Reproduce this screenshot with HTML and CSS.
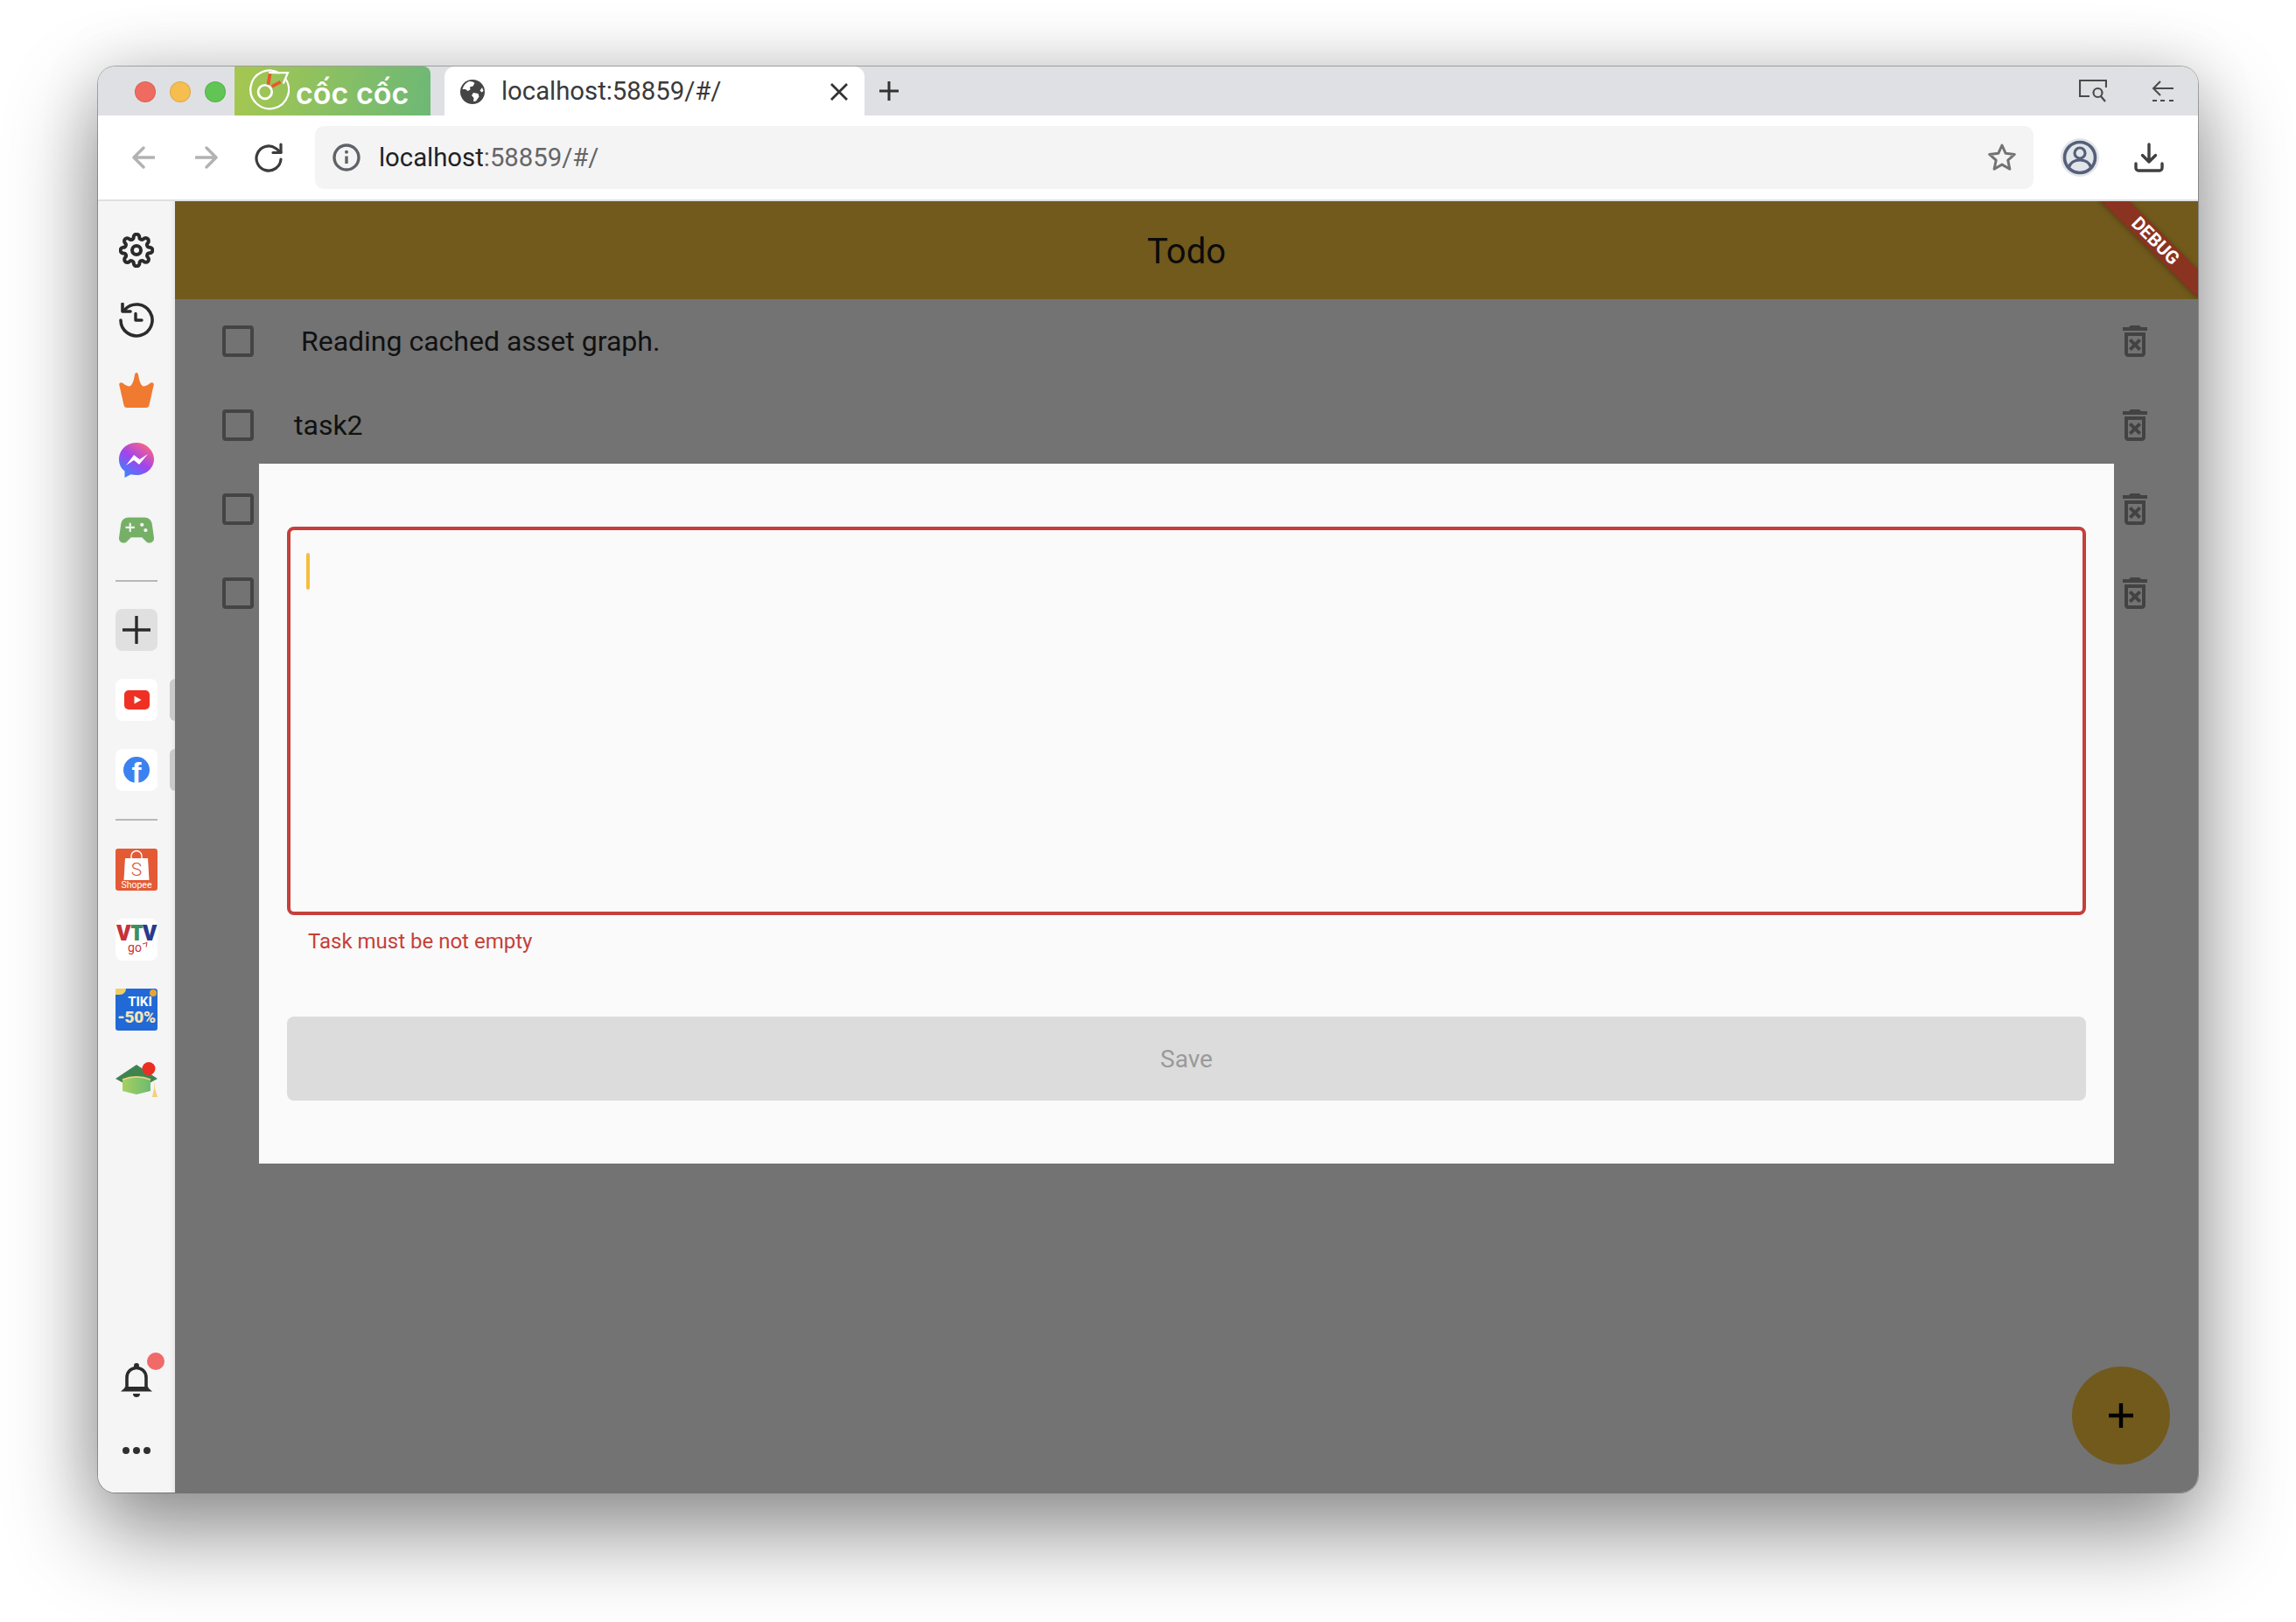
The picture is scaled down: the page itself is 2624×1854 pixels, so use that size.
FILE: index.html
```html
<!DOCTYPE html>
<html lang="en">
<head>
<meta charset="utf-8">
<title>Todo</title>
<link rel="stylesheet" href="styles.css">
</head>
<body>
<svg class="defs" width="0" height="0" aria-hidden="true">
  <symbol id="trash" viewBox="0 0 24 24"><path d="M14.12 10.47L12 12.59l-2.13-2.12-1.41 1.41L10.59 14l-2.12 2.12 1.41 1.41L12 15.41l2.12 2.12 1.41-1.41L13.41 14l2.12-2.12zM15.5 4l-1-1h-5l-1 1H5v2h14V4zM6 19c0 1.1.9 2 2 2h8c1.1 0 2-.9 2-2V7H6v12zM8 9h8v10H8V9z"/></symbol>
  <linearGradient id="msg" x1="0.15" y1="1" x2="0.85" y2="0"><stop offset="0" stop-color="#2f8bff"/><stop offset=".5" stop-color="#a243ee"/><stop offset=".9" stop-color="#f2618f"/></linearGradient>
  <linearGradient id="cap" x1="0" y1="0" x2="1" y2="0"><stop offset="0" stop-color="#a6d05f"/><stop offset="1" stop-color="#6dbb72"/></linearGradient>
</svg>
<div class="window">
  <header class="tabbar">
    <span class="light red"></span><span class="light amber"></span><span class="light green"></span>
    <div class="brand">
      <svg class="brand-mark" viewBox="0 0 48 48" fill="none">
        <path d="M37 4.500A21 21 0 1 0 43 10" stroke="#fff" stroke-width="2.200"/>
        <path d="M25 4H46L41 16" stroke="#fff" stroke-width="2.200"/>
        <circle cx="21" cy="25" r="7.500" stroke="#fff" stroke-width="2.600"/>
        <path d="M26.500 5l-2 12M38 14l-9.500 5" stroke="#e9582a" stroke-width="3.600"/>
      </svg>
      <span class="brand-name">cốc cốc</span>
    </div>
    <div class="tab">
      <svg class="globe" viewBox="0 0 28 28"><circle cx="14" cy="14" r="14" fill="#454545"/><path d="M9 2.500c3-1 6 0 7.500 1.500l-2 3.500-3.500 1 .5 3-3 1.500-2.500-2L2.500 11C3.500 7 6 4 9 2.500zM15 15l5.500 1 1 3.500-3.500 5-3 .5.500-4-2.500-3zM25 9l1.500 4-2 1.500-2-2z" fill="#fff"/></svg>
      <span class="tab-title">localhost:58859/#/</span>
      <svg class="tab-close" viewBox="0 0 22 22" fill="none"><path d="M2 2l18 18M20 2L2 20" stroke="#333" stroke-width="2.800"/></svg>
    </div>
    <svg class="tab-new" viewBox="0 0 24 24" fill="none"><path d="M12 1v22M1 12h22" stroke="#333" stroke-width="3"/></svg>
    <svg class="win-search" viewBox="0 0 32 26" fill="none" stroke="#4a4a4a" stroke-width="2.200"><path d="M12 19H1V1H31V9"/><circle cx="21.500" cy="15" r="5"/><path d="M25 19l5 6"/></svg>
    <svg class="win-back" viewBox="0 0 26 24" fill="none" stroke="#4a4a4a" stroke-width="2"><path d="M10 1L2 9l8 8M2 9H25"/><path d="M1 23h5M10 23h5M20 23h5"/></svg>
  </header>

  <nav class="toolbar">
    <button class="nav-btn"><svg class="ico-26" viewBox="0 0 26 26" fill="none" stroke="#b2b2b2" stroke-width="3.400" stroke-linecap="round" stroke-linejoin="round"><path d="M13 2L2 13l11 11M2 13H25"/></svg></button>
    <button class="nav-btn"><svg class="ico-26" viewBox="0 0 26 26" fill="none" stroke="#b2b2b2" stroke-width="3.400" stroke-linecap="round" stroke-linejoin="round"><path d="M13 2l11 11-11 11M24 13H1"/></svg></button>
    <button class="nav-btn"><svg class="ico-34" viewBox="0 0 34 34" fill="none" stroke="#3c3c3c" stroke-width="3.200" stroke-linecap="round" stroke-linejoin="round"><path d="M30 19A14 14 0 1 1 24 6.500L30 11"/><path d="M30 2v9.500H21"/></svg></button>
    <div class="address">
      <svg class="info" viewBox="0 0 32 32" fill="none"><circle cx="16" cy="16" r="14" stroke="#5f6368" stroke-width="3.400"/><path d="M16 14.500V23" stroke="#5f6368" stroke-width="3.400"/><circle cx="16" cy="9.800" r="2" fill="#5f6368"/></svg>
      <span class="url"><span class="url-host">localhost</span>:58859/#/</span>
      <svg class="star" viewBox="0 0 34 34" fill="none"><path d="M17 3l4.200 9.300 10.100 1.100-7.500 6.800 2.100 10L17 25.100 8.100 30.200l2.100-10-7.500-6.800 10.100-1.100z" stroke="#737373" stroke-width="3" stroke-linejoin="round"/></svg>
    </div>
    <svg class="profile" viewBox="0 0 44 44" fill="none">
      <circle cx="22" cy="22" r="22" fill="#e2e5ea"/>
      <circle cx="22" cy="22" r="17.500" stroke="#55607a" stroke-width="3.600"/>
      <circle cx="22" cy="17" r="6" stroke="#55607a" stroke-width="3.200"/>
      <path d="M9.500 33c2-6 7-8 12.500-8s10.500 2 12.500 8" stroke="#55607a" stroke-width="3.200"/>
    </svg>
    <svg class="download" viewBox="0 0 34 34" fill="none" stroke="#404040" stroke-width="3.400" stroke-linecap="round" stroke-linejoin="round"><path d="M17 2v19M9.500 14.500L17 22l7.500-7.500"/><path d="M2 24v5a3 3 0 0 0 3 3h24a3 3 0 0 0 3-3v-5"/></svg>
  </nav>

  <div class="body">
    <aside class="sidebar">
      <div class="side-group">
        <svg class="side-ico" viewBox="0 0 24 24" fill="none" stroke="#2b2b2b" stroke-width="2.400" stroke-linecap="round" stroke-linejoin="round"><circle cx="12" cy="12" r="3"/><path d="M19.400 15a1.650 1.650 0 0 0 .33 1.820l.06.06a2 2 0 0 1 0 2.830 2 2 0 0 1-2.830 0l-.06-.06a1.650 1.650 0 0 0-1.820-.33 1.650 1.650 0 0 0-1 1.510V21a2 2 0 0 1-2 2 2 2 0 0 1-2-2v-.09A1.650 1.650 0 0 0 9 19.400a1.650 1.650 0 0 0-1.820.33l-.06.06a2 2 0 0 1-2.830 0 2 2 0 0 1 0-2.830l.06-.06a1.650 1.650 0 0 0 .33-1.820 1.650 1.650 0 0 0-1.510-1H3a2 2 0 0 1-2-2 2 2 0 0 1 2-2h.09A1.650 1.650 0 0 0 4.600 9a1.650 1.650 0 0 0-.33-1.820l-.06-.06a2 2 0 0 1 0-2.830 2 2 0 0 1 2.830 0l.06.06a1.650 1.650 0 0 0 1.820.33H9a1.650 1.650 0 0 0 1-1.510V3a2 2 0 0 1 2-2 2 2 0 0 1 2 2v.09a1.650 1.650 0 0 0 1 1.510 1.650 1.650 0 0 0 1.820-.33l.06-.06a2 2 0 0 1 2.830 0 2 2 0 0 1 0 2.830l-.06.06a1.650 1.650 0 0 0-.33 1.820V9a1.650 1.650 0 0 0 1.510 1H21a2 2 0 0 1 2 2 2 2 0 0 1-2 2h-.09a1.650 1.650 0 0 0-1.510 1z"/></svg>
        <svg class="side-ico" viewBox="0 0 40 40" fill="none" stroke="#2b2b2b" stroke-width="3.600" stroke-linecap="round" stroke-linejoin="round"><path d="M2 20A18 18 0 1 0 7 7.500"/><path d="M4 1.500V10H13"/><path d="M19 12.500V20H26" stroke-width="3.400"/></svg>
        <svg class="side-ico" viewBox="0 0 40 40"><path fill="#f07a2f" d="M20 0C21.500 0 22 1.500 22.500 5C23.500 11 26 15.500 28 15.500C30.500 15.500 33 14 35.500 12C37.500 10.500 40.200 11.500 39.700 14L34.500 37C34 39 33 40 31 40H9C7 40 6 39 5.500 37L.3 14C-.2 11.500 2.500 10.500 4.500 12C7 14 9.500 15.500 12 15.500C14 15.500 16.500 11 17.500 5C18 1.500 18.500 0 20 0z"/></svg>
        <svg class="side-ico" viewBox="0 0 40 40"><path d="M20 0C9 0 0 8 0 19c0 6 2.500 10.500 6.500 13.500V40l7-3.800c2 .6 4.200 .8 6.500 .8 11 0 20-8 20-18S31 0 20 0z" fill="url(#msg)"/><path d="M8 26L17 14l6.500 5L33 13 23 25l-6-5z" fill="#fff"/></svg>
        <svg class="side-ico" viewBox="2.400 2.400 19.200 19.200"><path fill="#76b067" d="M21.580 16.090l-1.090-7.660C20.210 6.460 18.520 5 16.530 5H7.470C5.480 5 3.790 6.460 3.510 8.430l-1.090 7.660C2.200 17.630 3.390 19 4.940 19c.68 0 1.320-.27 1.800-.75L9 16h6l2.250 2.250c.48.48 1.130.75 1.800.75 1.560 0 2.750-1.370 2.530-2.910zM11 11H9v2H8v-2H6v-1h2V8h1v2h2v1zm4-1c-.55 0-1-.45-1-1s.45-1 1-1 1 .45 1 1-.45 1-1 1zm2 3c-.55 0-1-.45-1-1s.45-1 1-1 1 .45 1 1-.45 1-1 1z"/></svg>
      </div>
      <hr class="side-rule rule-a">
      <div class="tile-group">
        <div class="tile tile-add"><svg class="add-ico" viewBox="0 0 32 32" fill="none"><path d="M16 1v30M0 16h32" stroke="#2b2b2b" stroke-width="3.400" stroke-linecap="round"/></svg></div>
        <div class="tile tile-white has-handle"><svg class="yt" viewBox="0 0 29 22"><rect width="29" height="22" rx="5" fill="#ee3124"/><path d="M11.500 6.500l8 4.500-8 4.500z" fill="#fff"/></svg></div>
        <div class="tile tile-white has-handle"><svg class="fb" viewBox="0 0 30 30"><circle cx="15" cy="15" r="15" fill="#3b82f0"/><text x="9.500" y="30" class="fb-f">f</text></svg></div>
      </div>
      <hr class="side-rule rule-b">
      <div class="tile-group">
        <div class="tile tile-shopee">
          <svg class="bag" viewBox="0 0 30 34"><path d="M9 9V6.500a6 6 0 0 1 12 0V9" fill="none" stroke="#fff" stroke-width="1.400"/><path d="M2 9h26l1.500 25H.5z" fill="#fff"/><text x="15" y="29" class="bag-s">S</text></svg>
          <span class="shopee-name">Shopee</span>
        </div>
        <div class="tile tile-white">
          <svg class="vtv" viewBox="0 0 46 42"><text x="23" y="22" class="vtv-word"><tspan fill="#c6323a">V</tspan><tspan fill="#3f8f5d">T</tspan><tspan fill="#2a3a8c">V</tspan></text><text x="21" y="35" class="vtv-go">go</text><path d="M30 26l5-1.500-1 5" fill="none" stroke="#c6323a" stroke-width="1"/></svg>
        </div>
        <div class="tile tile-tiki">
          <span class="tiki-name">TIKI</span>
          <span class="tiki-off">-50%</span>
          <span class="tiki-coin tiki-coin-r"></span>
          <span class="tiki-coin tiki-coin-l"></span>
        </div>
        <div class="tile tile-cap">
          <svg class="cap" viewBox="0 0 48 40">
            <path d="M24 3L48 19 24 32 0 19z" fill="#3f8450"/>
            <path d="M8 20C18 16 30 16 40 20V33L24 37 8 33z" fill="url(#cap)"/>
            <path d="M8 20C18 16 30 16 40 20" fill="none" stroke="#f0d27a" stroke-width="1.800"/>
            <path d="M45 21v9l3 10h-6l2-10z" fill="#f5cf7a"/>
            <circle cx="38" cy="7.500" r="7.500" fill="#ea2e22"/>
          </svg>
        </div>
      </div>
      <div class="side-bottom">
        <div class="bell-wrap">
          <svg class="bell" viewBox="0 0 36 39" fill="#2b2b2b"><circle cx="18" cy="3" r="3"/><path d="M7 28V16.500C7 10 12 5.500 18 5.500S29 10 29 16.500V28" fill="none" stroke="#2b2b2b" stroke-width="3.600"/><path d="M0 32.500L4 29 5 27H31l1 2 4 3.500z"/><path d="M14 35h8a4 4 0 0 1-8 0z"/></svg>
          <span class="bell-badge"></span>
        </div>
        <div class="dots"><span></span><span></span><span></span></div>
      </div>
    </aside>

    <main class="app">
      <div class="appbar">
        <h1 class="appbar-title">Todo</h1>
        <div class="debug-band"><span>DEBUG</span></div>
      </div>
      <ul class="todos">
        <li class="todo"><span class="check"></span><span class="todo-text"> Reading cached asset graph.</span><svg class="trash"><use href="#trash"/></svg></li>
        <li class="todo"><span class="check"></span><span class="todo-text">task2</span><svg class="trash"><use href="#trash"/></svg></li>
        <li class="todo"><span class="check"></span><span class="todo-text"></span><svg class="trash"><use href="#trash"/></svg></li>
        <li class="todo"><span class="check"></span><span class="todo-text"></span><svg class="trash"><use href="#trash"/></svg></li>
      </ul>
      <section class="sheet">
        <div class="field"><span class="caret"></span></div>
        <p class="field-error">Task must be not empty</p>
        <button class="save" disabled>Save</button>
      </section>
      <button class="fab"><svg class="fab-ico" viewBox="0 0 28 28"><path d="M14 0v28M0 14h28" stroke="#000" stroke-width="4.400"/></svg></button>
    </main>
  </div>
</div>
</body>
</html>
```
FILE: styles.css
```css
* { box-sizing: border-box; }
html, body { margin: 0; height: 1854px; overflow: hidden; background: #fff; }
body { padding: 76px 112px 0; font-family: Roboto, "Liberation Sans", sans-serif; }
.defs { position: absolute; }
svg { display: block; flex: none; }

.window {
  width: 2400px; height: 1630px; display: flex; flex-direction: column;
  border-radius: 20px; overflow: hidden; background: #fff;
  box-shadow: 0 0 0 1px rgba(0,0,0,.28), 0 44px 100px 4px rgba(0,0,0,.42), 0 0 70px rgba(0,0,0,.12);
}

/* tab strip */
.tabbar { height: 56px; flex: none; display: flex; align-items: center; background: #dfe0e4; padding-left: 42px; }
.light { width: 24px; height: 24px; border-radius: 50%; margin-right: 16px; margin-top: 2px; flex: none; border: 1px solid rgba(0,0,0,.1); }
.red { background: #ef6b60; }
.amber { background: #f6bd4f; }
.green { background: #60c554; margin-right: 10px; }
.brand {
  width: 224px; height: 56px; display: flex; align-items: center; flex: none; padding-left: 13px;
  background: linear-gradient(100deg, #a6c750, #6db876); border-top-right-radius: 8px;
}
.brand-mark { width: 50px; height: 50px; }
.brand-name { color: #fff; font: 600 34px Inter, Roboto, sans-serif; line-height: 1; margin-left: 7px; white-space: nowrap; margin-top: 6px; }
.tab {
  width: 480px; height: 56px; margin-left: 16px; flex: none; background: #fff;
  display: flex; align-items: center; padding: 0 18px; border-radius: 12px 12px 0 0;
}
.globe { width: 28px; height: 28px; margin-top: 2px; }
.tab-title { margin-left: 19px; font-size: 29.300px; color: #3a3a3a; white-space: nowrap; }
.tab-close { width: 22px; height: 22px; margin-left: auto; margin-top: 2px; }
.tab-new { width: 24px; height: 24px; margin-left: 16px; }
.win-search { width: 32px; height: 26px; margin-left: auto; }
.win-back { width: 26px; height: 24px; margin-left: 51px; margin-right: 27px; }

/* toolbar */
.toolbar { height: 98px; flex: none; display: flex; align-items: center; padding: 0 39px 0 16px; border-bottom: 2px solid #dfe0e3; background: #fff; }
.nav-btn { width: 72px; height: 72px; border: 0; background: none; padding: 0; display: flex; align-items: center; justify-content: center; flex: none; }
.ico-26 { width: 26px; height: 26px; }
.ico-34 { width: 34px; height: 34px; }
.address { flex: 1; height: 72px; margin-left: 16px; display: flex; align-items: center; background: #f4f4f5; border-radius: 10px; padding: 0 19px 0 20px; }
.info { width: 32px; height: 32px; }
.url { margin-left: 21px; font-size: 29.300px; color: #666; white-space: nowrap; }
.url-host { color: #222; }
.star { width: 34px; height: 34px; margin-left: auto; }
.profile { width: 44px; height: 44px; margin-left: 31px; }
.download { width: 34px; height: 34px; margin-left: 40px; }

/* body */
.body { flex: 1; display: flex; min-height: 0; }
.sidebar { width: 88px; flex: none; display: flex; flex-direction: column; align-items: center; background: #f5f5f5; padding: 36px 0 28px; box-shadow: inset -7px 0 7px -7px rgba(0,0,0,.12); }
.side-group { display: flex; flex-direction: column; gap: 40px; }
.side-ico { width: 40px; height: 40px; }
.side-rule { width: 48px; height: 2px; border: 0; margin: 0; background: #b8b8b8; flex: none; }
.rule-a { margin: 37px 0 31px; }
.rule-b { margin: 32px 0; }
.tile-group { display: flex; flex-direction: column; gap: 32px; }
.tile { width: 48px; height: 48px; border-radius: 8px; display: flex; align-items: center; justify-content: center; position: relative; flex: none; }
.tile-add { background: #e0e0e0; }
.add-ico { width: 32px; height: 32px; }
.tile-white { background: #fff; }
.has-handle::after { content: ""; position: absolute; left: 62px; top: 0; width: 6px; height: 48px; background: #c9c9c9; border-radius: 6px 0 0 6px; }
.yt { width: 29px; height: 22px; }
.fb { width: 30px; height: 30px; overflow: visible; }
.fb-f { font: 700 33px "Liberation Sans", sans-serif; fill: #fff; }

.tile-shopee { background: #e35a35; border-radius: 3px; flex-direction: column; justify-content: flex-start; padding-top: 2px; }
.bag { width: 30px; height: 34px; overflow: visible; }
.bag-s { font: 300 21px Roboto, sans-serif; fill: #d9573a; text-anchor: middle; }
.shopee-name { color: #fff; font-size: 10.500px; line-height: 11px; }
.vtv { width: 46px; height: 42px; overflow: visible; }
.vtv-word { font: 800 24px "Open Sans", sans-serif; text-anchor: middle; letter-spacing: -.5px; }
.vtv-go { font: 400 14px Roboto, sans-serif; fill: #c6323a; text-anchor: middle; }
.tile-tiki { background: #2169d6; border-radius: 3px; flex-direction: column; line-height: 1; }
.tiki-name { color: #fff; font-weight: 700; font-size: 15px; margin-top: 2px; margin-left: 8px; }
.tiki-off { color: #f6e5b5; font-weight: 900; font-size: 19px; letter-spacing: -.3px; }
.tiki-coin { position: absolute; width: 8px; height: 8px; border-radius: 50%; background: #e8a33b; }
.tiki-coin-r { right: 1px; top: 1px; }
.tiki-coin-l { left: 0; top: 0; width: 12px; height: 7px; border-radius: 0 0 8px 0; background: #f0d060; }
.tile-cap { align-items: flex-start; padding-top: 4px; }
.cap { width: 48px; height: 40px; }

.side-bottom { margin-top: auto; display: flex; flex-direction: column; align-items: center; gap: 40px; }
.bell-wrap { position: relative; width: 36px; height: 40px; }
.bell { width: 36px; height: 39px; }
.bell-badge { position: absolute; left: 30px; top: -12px; width: 20px; height: 20px; border-radius: 50%; background: #f06a68; }
.dots { height: 40px; display: flex; align-items: center; gap: 4px; }
.dots span { width: 8px; height: 8px; border-radius: 50%; background: #2f2f2f; }

/* flutter app */
.app { flex: 1; position: relative; background: #737373; min-width: 0; }
.appbar { height: 112px; padding-top: 2px; background: #715a1c; display: flex; align-items: center; justify-content: center; position: relative; overflow: hidden; }
.appbar-title { margin: 0; font-size: 40px; font-weight: 400; color: #0b0b0b; }
.debug-band {
  position: absolute; left: 2183px; top: 34px; width: 160px; height: 23px;
  background: #8a3320; color: #fff; display: flex; align-items: center; justify-content: center;
  transform: rotate(45deg); box-shadow: 0 1px 6px rgba(0,0,0,.3);
}
.debug-band span { font-size: 21px; font-weight: 700; line-height: 1; }
.todos { list-style: none; margin: 0; padding: 0; }
.todo { height: 96px; display: flex; align-items: center; padding: 0 48px 0 54px; }
.check { width: 36px; height: 36px; flex: none; border: 4px solid #444; border-radius: 4px; }
.todo-text { margin-left: 46px; flex: 1; font-size: 32px; color: #111; white-space: pre; }
.trash { width: 48px; height: 48px; fill: #434343; }

.sheet { position: absolute; left: 96px; top: 300px; width: 2120px; height: 800px; background: #fafafa; padding: 72px 32px; display: flex; flex-direction: column; }
.field { height: 444px; flex: none; border: 4px solid #c63f3b; border-radius: 8px; padding: 26px 18px; }
.caret { display: block; width: 4px; height: 42px; background: #f6bd3f; border-radius: 2px; }
.field-error { margin: 16px 0 0 24px; font-size: 24px; line-height: 28px; color: #c63f3b; }
.save { margin-top: auto; height: 96px; flex: none; border: 0; border-radius: 8px; background: #dcdcdc; color: #9a9a9a; font: 400 28px Roboto, sans-serif; }

.fab { position: absolute; right: 32px; bottom: 32px; width: 112px; height: 112px; border: 0; padding: 0; border-radius: 50%; background: #715a1c; display: flex; align-items: center; justify-content: center; }
.fab-ico { width: 28px; height: 28px; }
```
